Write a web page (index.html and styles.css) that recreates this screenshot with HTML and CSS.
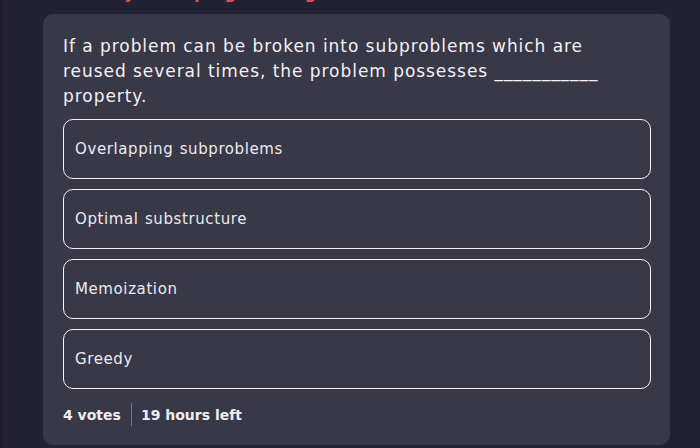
FILE: index.html
```html
<!DOCTYPE html>
<html>
<head>
<meta charset="utf-8">
<link rel="stylesheet" href="styles.css">
</head>
<body>
<div class="page">
  <div class="title"><span class="title-text">Dynamic programming</span></div>
  <div class="card">
    <p class="question">If a problem can be broken into subproblems which are reused several times, the problem possesses ___________ property.</p>
    <div class="options">
      <div class="option">Overlapping subproblems</div>
      <div class="option">Optimal substructure</div>
      <div class="option">Memoization</div>
      <div class="option">Greedy</div>
    </div>
    <div class="footer">
      <span class="votes">4 votes</span>
      <span class="sep"></span>
      <span class="left">19 hours left</span>
    </div>
  </div>
</div>
</body>
</html>
```
FILE: styles.css
```css
html, body {
  margin: 0;
  padding: 0;
  height: 100%;
  overflow: hidden;
}
body {
  background: #232234;
  border-left: 3px solid #1d1a2a;
  font-family: "DejaVu Sans", sans-serif;
  color: #ecebf0;
}
.page {
  padding-left: 40px;
  width: 627px;
}
.title {
  height: 2px;
  overflow: hidden;
  margin-bottom: 12px;
  padding-left: 68px;
}
.title-text {
  display: block;
  color: #e0505e;
  font-size: 16px;
  line-height: 20px;
  font-weight: bold;
  margin-top: -16px;
}
.card {
  background: #393847;
  border-radius: 10px;
  padding: 20px 19px 19px 20px;
}
.question {
  margin: 0 0 10px 0;
  font-size: 17px;
  line-height: 25px;
  letter-spacing: 0.95px;
  color: #f2f1f5;
  max-width: 545px;
}
.options {
  display: flex;
  flex-direction: column;
  gap: 10px;
}
.option {
  height: 58px;
  border: 1px solid #f4f4f6;
  border-radius: 10px;
  display: flex;
  align-items: center;
  padding-left: 11px;
  font-size: 15px;
  letter-spacing: 0.6px;
  word-spacing: 1px;
  color: #ecebf0;
}
.footer {
  display: flex;
  align-items: center;
  margin-top: 14px;
  height: 23px;
  font-size: 14px;
  font-weight: bold;
  color: #efeef3;
}
.sep {
  width: 1px;
  height: 23px;
  background: #77768a;
  margin: 0 9px 0 10px;
}
```
